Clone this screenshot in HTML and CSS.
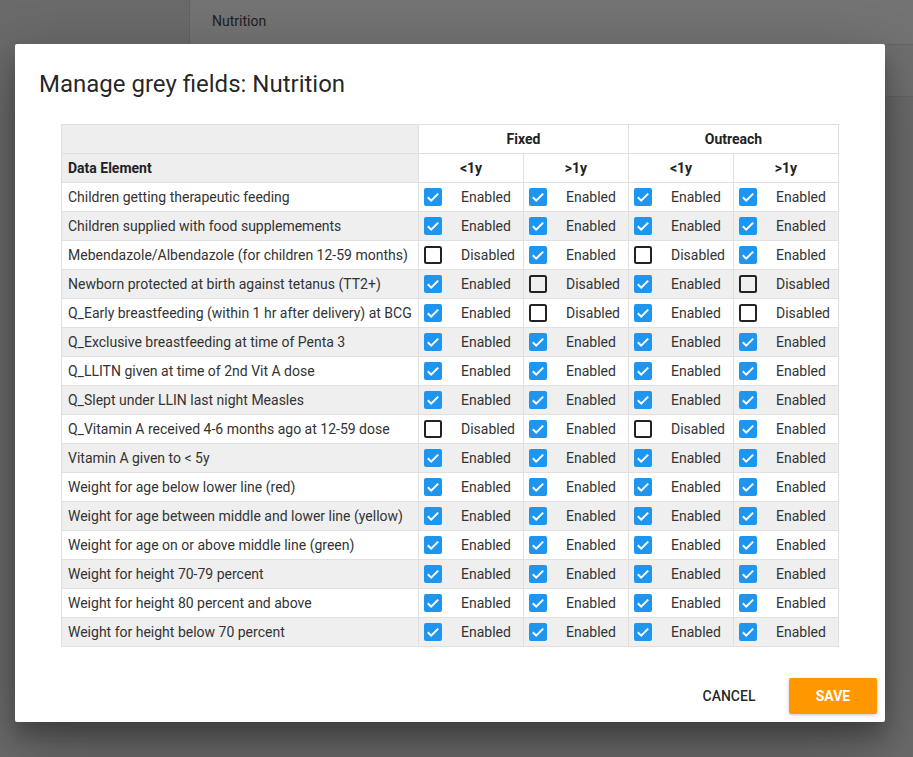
FILE: index.html
```html
<!DOCTYPE html>
<html>
<head>
<meta charset="utf-8">
<link rel="stylesheet" href="styles.css">
</head>
<body>
<div class="page">
  <div class="sidebar"><div class="sidebar-top"></div></div>
  <div class="main">
    <div class="topbar"><span class="crumb">Nutrition</span></div>
    <div class="subbar"></div>
  </div>
</div>

<div class="dialog">
  <h2 class="dialog-title">Manage grey fields: Nutrition</h2>
  <div class="dialog-body">
    <table class="grid">
      <colgroup>
        <col class="c-name"><col class="c-val"><col class="c-val"><col class="c-val"><col class="c-val">
      </colgroup>
      <thead>
        <tr>
          <th class="hd-name"></th>
          <th colspan="2" class="hd">Fixed</th>
          <th colspan="2" class="hd">Outreach</th>
        </tr>
        <tr>
          <th class="hd-name">Data Element</th>
          <th class="hd">&lt;1y</th>
          <th class="hd">&gt;1y</th>
          <th class="hd">&lt;1y</th>
          <th class="hd">&gt;1y</th>
        </tr>
      </thead>
      <tbody id="rows"></tbody>
    </table>
  </div>
  <div class="dialog-actions">
    <button class="btn btn-flat">Cancel</button>
    <button class="btn btn-raised">Save</button>
  </div>
</div>
<script src="app.js"></script>
</body>
</html>
```

FILE: styles.css
```css
html, body {
  margin: 0;
  padding: 0;
}
body {
  font-family: Roboto, "Liberation Sans", Arial, sans-serif;
  width: 913px;
  height: 757px;
  overflow: hidden;
  background: #6a6a6a;
}
.page {
  display: flex;
  height: 757px;
}
.sidebar {
  width: 190px;
  background: #6a6a6a;
}
.sidebar-top {
  height: 130px;
  margin-left: 189px;
  width: 1px;
  background: #636363;
}
.main {
  flex: 1;
  background: #6a6a6a;
}
.topbar {
  height: 44px;
  border-bottom: 1px solid #666;
  display: flex;
  align-items: center;
  padding-left: 22px;
  background: #737373;
}
.crumb {
  font-size: 14px;
  color: #1e1e1e;
  margin-top: -2px;
}
.subbar {
  height: 51px;
  border-bottom: 1px solid #646464;
  background: #6f6f6f;
}

.dialog {
  position: absolute;
  left: 15px;
  top: 44px;
  width: 870px;
  height: 678px;
  background: #fff;
  border-radius: 2px;
  box-shadow: 0 19px 60px rgba(0,0,0,0.30), 0 15px 20px rgba(0,0,0,0.22);
  display: flex;
  flex-direction: column;
}
.dialog-title {
  margin: 0;
  padding: 24px 24px 24px 24px;
  font-size: 24px;
  font-weight: 400;
  line-height: 32px;
  color: rgba(0,0,0,0.87);
}
.dialog-body {
  flex: 1;
  display: flex;
  justify-content: center;
}
.grid {
  border-collapse: collapse;
  width: 777px;
  table-layout: fixed;
  font-size: 14px;
  color: #333;
  align-self: flex-start;
}
.c-name { width: 357px; }
.c-val { width: 105px; }
.grid th, .grid td {
  border: 1px solid #e0e0e0;
  height: 28px;
  padding: 0;
}
.grid th {
  font-weight: 700;
  font-size: 14px;
  color: #222;
}
.hd-name {
  background: #eeeeee;
  text-align: left;
  padding-left: 6px !important;
}
.hd {
  background: #fff;
  text-align: center;
}
.grid td.name {
  padding-left: 6px;
  color: #333;
}
.grid tbody tr:nth-child(even) td {
  background: #efefef;
}
.cell {
  display: flex;
  align-items: center;
  padding-left: 5px;
  gap: 19px;
}
.box {
  width: 18px;
  height: 18px;
  display: block;
  flex: none;
}
.lbl {
  color: #333;
}
.dialog-actions {
  display: flex;
  justify-content: flex-end;
  padding: 8px;
  gap: 16px;
}
.btn {
  font-family: Roboto, "Liberation Sans", Arial, sans-serif;
  height: 36px;
  min-width: 88px;
  border: none;
  border-radius: 2px;
  font-size: 14px;
  font-weight: 500;
  text-transform: uppercase;
  padding: 0 16px;
  cursor: pointer;
}
.btn-flat {
  background: transparent;
  color: rgba(0,0,0,0.87);
}
.btn-raised {
  background: #ff9800;
  color: #fff;
  font-weight: 700;
  box-shadow: 0 1px 4px rgba(0,0,0,0.12), 0 1px 3px rgba(0,0,0,0.12);
}
```

FILE: app.js
```js
const rows = [
  ["Children getting therapeutic feeding", 1,1,1,1],
  ["Children supplied with food supplemements", 1,1,1,1],
  ["Mebendazole/Albendazole (for children 12-59 months)", 0,1,0,1],
  ["Newborn protected at birth against tetanus (TT2+)", 1,0,1,0],
  ["Q_Early breastfeeding (within 1 hr after delivery) at BCG", 1,0,1,0],
  ["Q_Exclusive breastfeeding at time of Penta 3", 1,1,1,1],
  ["Q_LLITN given at time of 2nd Vit A dose", 1,1,1,1],
  ["Q_Slept under LLIN last night Measles", 1,1,1,1],
  ["Q_Vitamin A received 4-6 months ago at 12-59 dose", 0,1,0,1],
  ["Vitamin A given to < 5y", 1,1,1,1],
  ["Weight for age below lower line (red)", 1,1,1,1],
  ["Weight for age between middle and lower line (yellow)", 1,1,1,1],
  ["Weight for age on or above middle line (green)", 1,1,1,1],
  ["Weight for height 70-79 percent", 1,1,1,1],
  ["Weight for height 80 percent and above", 1,1,1,1],
  ["Weight for height below 70 percent", 1,1,1,1]
];
const on = '<svg class="box" viewBox="0 0 18 18"><rect x="0" y="0" width="18" height="18" rx="2" fill="#1e96f0"/><path d="M3.8 9.2 L7.2 12.6 L14.2 5.6" fill="none" stroke="#fff" stroke-width="2"/></svg>';
const off = '<svg class="box" viewBox="0 0 18 18"><rect x="1" y="1" width="16" height="16" rx="1.5" fill="none" stroke="#222" stroke-width="2"/></svg>';
const tb = document.getElementById('rows');
tb.innerHTML = rows.map(r => {
  const cells = r.slice(1).map(v =>
    '<td><div class="cell">' + (v ? on : off) + '<span class="lbl">' + (v ? 'Enabled' : 'Disabled') + '</span></div></td>'
  ).join('');
  const name = r[0].replace(/</g, '&lt;');
  return '<tr><td class="name">' + name + '</td>' + cells + '</tr>';
}).join('');
```
